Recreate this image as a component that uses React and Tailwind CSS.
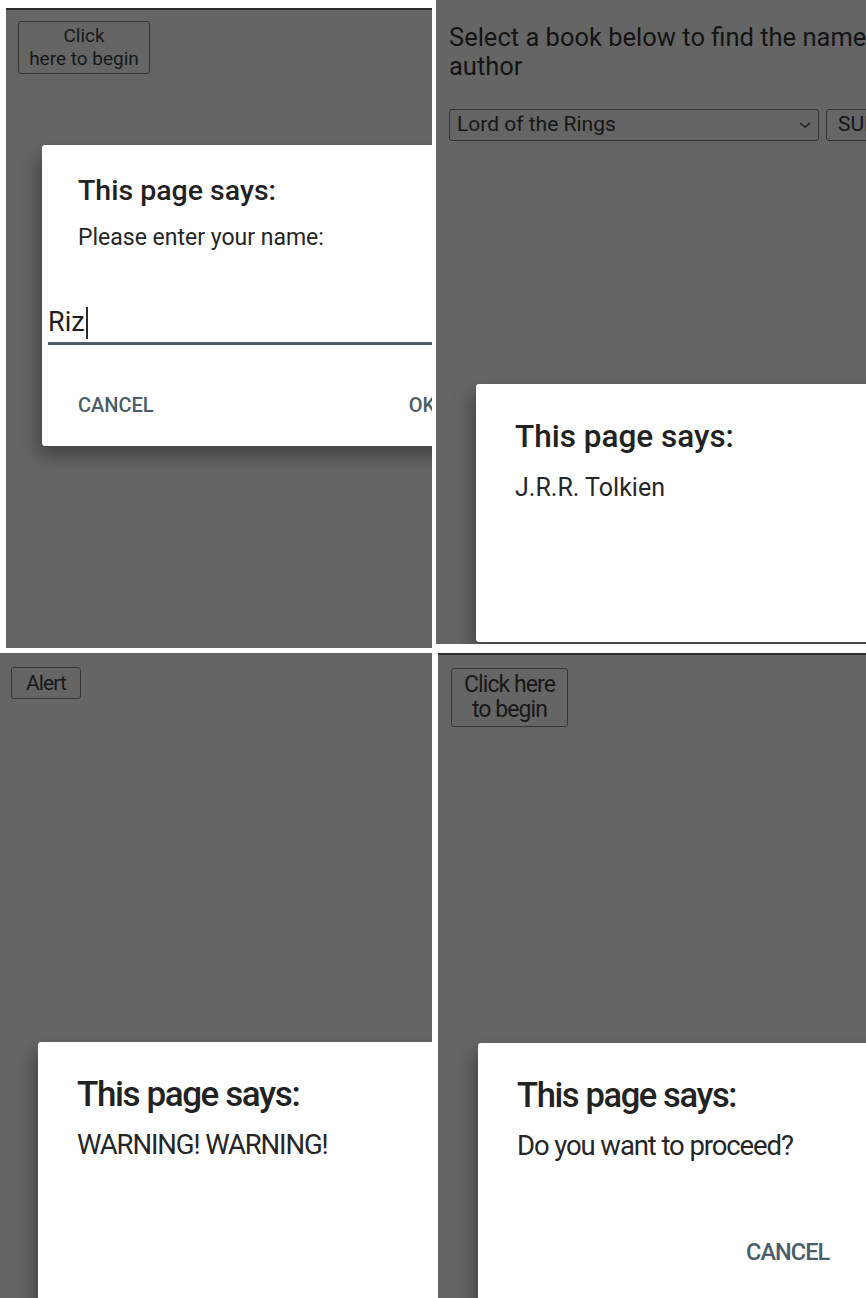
import React from 'react';

const font = { fontFamily: 'Roboto, "Noto Sans", sans-serif' };

function PageButton({ children, className = '' }) {
  return (
    <div
      className={`border border-[#353535] rounded-[3px] text-[#181818] text-center ${className}`}
    >
      {children}
    </div>
  );
}

function Dialog({ className = '', children }) {
  return (
    <div
      className={`bg-white rounded-[3px] shadow-[-4px_10px_18px_rgba(0,0,0,0.35)] ${className}`}
    >
      {children}
    </div>
  );
}

function App() {
  return (
    <div className="w-[866px] h-[1298px] bg-white overflow-hidden flex flex-col" style={font}>
      {/* top row */}
      <div className="flex h-[651px] shrink-0">
        {/* prompt screen */}
        <div className="ml-[6px] mt-[8px] w-[426px] h-[640px] bg-[#656565] border-t-2 border-[#2e2e2e] overflow-hidden flex flex-col">
          <PageButton className="ml-[12px] mt-[11px] w-[132px] h-[53px] pt-[2px] text-[19px] leading-[23px]">
            Click
            <br />
            here to begin
          </PageButton>
          <Dialog className="ml-[36px] mt-[71px] w-[420px] h-[301px] pl-[36px] pt-[32px] flex flex-col shrink-0">
            <div className="text-[28.5px] font-medium text-[#222] leading-none">This page says:</div>
            <div className="text-[23px] text-[#262626] mt-[20px] leading-none">Please enter your name:</div>
            <div className="-ml-[30px] mt-[58px] border-b-[3px] border-[#4e5d68] pb-[3px] flex items-center">
              <span className="text-[27px] text-[#1e1e1e] leading-none">Riz</span>
              <span className="w-[2px] h-[32px] bg-[#2b2b2b] ml-[1px]" />
            </div>
            <div className="flex mt-[50px] text-[20px] font-medium text-[#4a5d68] leading-none">
              <span>CANCEL</span>
              <span className="ml-[255px]">OK</span>
            </div>
          </Dialog>
        </div>

        {/* select screen */}
        <div className="ml-[4px] w-[430px] h-[644px] bg-[#656565] overflow-hidden flex flex-col">
          <div className="pl-[13px] pt-[23px] text-[25.5px] leading-[29px] text-[#141414] whitespace-nowrap">
            Select a book below to find the name of the
            <br />
            author
          </div>
          <div className="flex mt-[28px] ml-[13px] gap-[7px]">
            <div className="w-[370px] h-[32px] border border-[#333] rounded-[3px] flex items-center justify-between pl-[7px] pr-[6px] text-[21px] text-[#161616] shrink-0">
              <span>Lord of the Rings</span>
              <svg width="14" height="10" viewBox="0 0 14 10" fill="none" stroke="#222" strokeWidth="1.6">
                <path d="M2 3l5 4 5-4" />
              </svg>
            </div>
            <div className="h-[32px] border border-[#333] rounded-[3px] pl-[11px] pr-[8px] flex items-center text-[21px] text-[#161616] shrink-0">
              SUBMIT
            </div>
          </div>
          <Dialog className="ml-[40px] mt-[243px] w-[420px] h-[258px] pl-[39px] pt-[37px] flex flex-col shrink-0">
            <div className="text-[31.5px] font-medium text-[#222] leading-none">This page says:</div>
            <div className="text-[25px] text-[#262626] mt-[22px] leading-none">J.R.R. Tolkien</div>
          </Dialog>
        </div>
      </div>

      {/* bottom row */}
      <div className="flex flex-1 mt-[2px]">
        {/* alert screen */}
        <div className="w-[432px] h-full bg-[#656565] overflow-hidden flex flex-col">
          <PageButton className="ml-[11px] mt-[14px] w-[70px] h-[32px] text-[21px] leading-[30px] tracking-[-0.04em]">
            Alert
          </PageButton>
          <Dialog className="ml-[38px] mt-[343px] w-[420px] h-[300px] pl-[39px] pt-[35px] flex flex-col shrink-0">
            <div className="text-[35px] font-medium text-[#222] leading-none tracking-[-0.04em]">This page says:</div>
            <div className="text-[27.5px] text-[#262626] mt-[19px] leading-none tracking-[-0.04em]">WARNING! WARNING!</div>
          </Dialog>
        </div>

        {/* confirm screen */}
        <div className="ml-[6px] w-[428px] h-full bg-[#656565] border-t-2 border-[#2e2e2e] overflow-hidden flex flex-col">
          <PageButton className="ml-[13px] mt-[13px] w-[117px] h-[59px] pt-[3px] text-[23px] leading-[25px] tracking-[-0.04em]">
            Click here
            <br />
            to begin
          </PageButton>
          <Dialog className="ml-[40px] mt-[316px] w-[420px] h-[300px] pl-[39px] pt-[35px] flex flex-col shrink-0">
            <div className="text-[34.5px] font-medium text-[#222] leading-none tracking-[-0.04em]">This page says:</div>
            <div className="text-[27.5px] text-[#262626] mt-[19px] leading-none tracking-[-0.04em]">Do you want to proceed?</div>
            <div className="mt-[82px] ml-[229px] text-[23.5px] font-medium text-[#4a5d68] leading-none tracking-[-0.04em]">
              CANCEL
            </div>
          </Dialog>
        </div>
      </div>
    </div>
  );
}

export default App;
